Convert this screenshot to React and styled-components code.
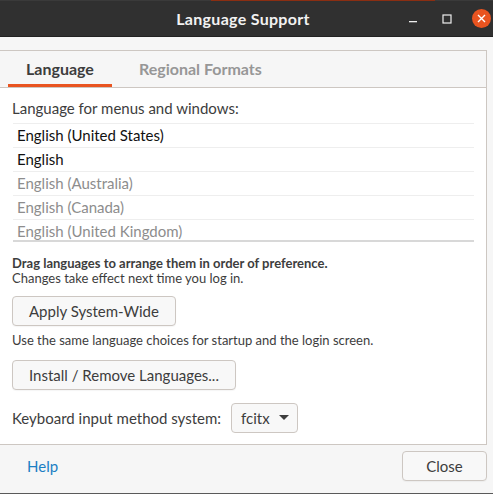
import React from "react";
import styled, { createGlobalStyle } from "styled-components";

const Global = createGlobalStyle`
  html, body { margin: 0; padding: 0; background: #f6f6f6; }
  body { font-family: Lato, "Noto Sans", "DejaVu Sans", sans-serif; font-size: 15px; color: #3d3d3d; }
  * { box-sizing: border-box; }
`;

const Window = styled.div`
  width: 493px;
  height: 494px;
  display: flex;
  flex-direction: column;
  background: #f6f6f6;
  overflow: hidden;
  border-bottom: 1px solid #5a5a5a;
`;

const TopEdge = styled.div`
  height: 1px;
  background: linear-gradient(to right, #3a3a3a 0 211px, #8a2e12 211px 435px, #3a3a3a 435px);
`;

const TitleBar = styled.div`
  height: 36px;
  background: #303030;
  display: flex;
  align-items: center;
  justify-content: center;
  position: relative;
  border-bottom: 1px solid #222;
`;

const Title = styled.div`
  color: #f2f2f2;
  font-weight: 700;
  font-size: 16px;
  letter-spacing: 0.3px;
  padding-right: 7px;
`;

const Controls = styled.div`
  position: absolute;
  right: 2px;
  top: 0;
  height: 100%;
  display: flex;
  align-items: center;
  gap: 14px;
`;

const Ctl = styled.div`
  width: 20px;
  height: 20px;
  display: flex;
  align-items: center;
  justify-content: center;
`;

const CloseCircle = styled.div`
  width: 19px;
  height: 19px;
  border-radius: 50%;
  background: #e95420;
  display: flex;
  align-items: center;
  justify-content: center;
`;

const Body = styled.div`
  flex: 1;
  display: flex;
  flex-direction: column;
  padding-top: 13px;
`;

const Notebook = styled.div`
  margin: 0 6px 0 -1px;
  border: 1px solid #cdc7c2;
  display: flex;
  flex-direction: column;
  height: 395px;
`;

const TabBar = styled.div`
  height: 37px;
  display: flex;
  padding-left: 8px;
  border-bottom: 1px solid #cdc7c2;
  background: #f6f6f6;
`;

const Tab = styled.div`
  height: 100%;
  padding: 0 ${p => p.$pad}px;
  display: flex;
  align-items: center;
  font-weight: 700;
  font-size: 16px;
  color: ${p => (p.$active ? "#3d3d3d" : "#979797")};
  border-bottom: 3px solid ${p => (p.$active ? "#e95420" : "transparent")};
  padding-top: 2px;
`;

const Page = styled.div`
  flex: 1;
  background: #fff;
  padding: 10px 12px 0 12px;
  display: flex;
  flex-direction: column;
`;

const Label = styled.div`
  font-size: 15px;
  line-height: 20px;
  color: #3d3d3d;
`;

const List = styled.div`
  margin-top: 5px;
  margin-left: 1px;
  height: 119px;
  overflow: hidden;
  border-top: 1px solid #eeeeee;
  border-bottom: 2px solid #d8d8d8;
`;

const Row = styled.div`
  height: 24px;
  flex-shrink: 0;
  padding: 0 0 2px 4px;
  display: flex;
  align-items: center;
  font-size: 15px;
  color: ${p => (p.$dim ? "#8d8d8d" : "#111")};
  border-bottom: 1px solid #eeeeee;
`;

const Hint = styled.div`
  margin-top: ${p => p.$mt || 0}px;
  font-size: 13px;
  line-height: 15px;
  color: #3d3d3d;
  font-weight: ${p => (p.$bold ? 700 : 400)};
`;

const Button = styled.button`
  font-family: inherit;
  font-size: 15px;
  color: #3d3d3d;
  background: #f8f8f8;
  border: 1px solid #cdc7c2;
  border-radius: 4px;
  height: 30px;
  padding: 0 16px;
  align-self: flex-start;
  margin-top: ${p => p.$mt || 0}px;
  box-shadow: 0 1px 1px rgba(0,0,0,0.04);
`;

const Note = styled.div`
  margin-top: 6px;
  font-size: 13px;
  line-height: 16px;
  color: #3d3d3d;
`;

const KbdRow = styled.div`
  margin-top: 13px;
  display: flex;
  align-items: center;
  gap: 10px;
`;

const Combo = styled.button`
  font-family: inherit;
  font-size: 15px;
  color: #3d3d3d;
  background: #f8f8f8;
  border: 1px solid #cdc7c2;
  border-radius: 4px;
  height: 30px;
  padding: 0 8px 0 9px;
  display: flex;
  align-items: center;
  gap: 9px;
`;

const Footer = styled.div`
  flex: 1;
  display: flex;
  align-items: flex-start;
  justify-content: space-between;
  padding: 6px 6px 0 27px;
`;

const HelpLink = styled.a`
  color: #1b7fc4;
  font-size: 15px;
  line-height: 30px;
  text-decoration: none;
`;

const CloseBtn = styled(Button)`
  width: 85px;
  padding: 0;
  margin-top: 0;
`;

export default function App() {
  return (
    <>
      <Global />
      <Window>
        <TopEdge />
        <TitleBar>
          <Title>Language Support</Title>
          <Controls>
            <Ctl>
              <svg width="10" height="10" viewBox="0 0 10 10"><rect x="1" y="7" width="8" height="1.3" fill="#eee" /></svg>
            </Ctl>
            <Ctl>
              <svg width="10" height="10" viewBox="0 0 10 10"><rect x="1" y="1" width="8" height="8" fill="none" stroke="#eee" strokeWidth="1.2" /></svg>
            </Ctl>
            <Ctl>
              <CloseCircle>
                <svg width="9" height="9" viewBox="0 0 9 9"><path d="M1 1L8 8M8 1L1 8" stroke="#fff" strokeWidth="1.4" /></svg>
              </CloseCircle>
            </Ctl>
          </Controls>
        </TitleBar>
        <Body>
          <Notebook>
            <TabBar>
              <Tab $active $pad={18}>Language</Tab>
              <Tab $pad={27}>Regional Formats</Tab>
            </TabBar>
            <Page>
              <Label>Language for menus and windows:</Label>
              <List>
                <Row>English (United States)</Row>
                <Row>English</Row>
                <Row $dim>English (Australia)</Row>
                <Row $dim>English (Canada)</Row>
                <Row $dim>English (United Kingdom)</Row>
              </List>
              <Hint $bold $mt={14}>Drag languages to arrange them in order of preference.</Hint>
              <Hint>Changes take effect next time you log in.</Hint>
              <Button $mt={10}>Apply System-Wide</Button>
              <Note>Use the same language choices for startup and the login screen.</Note>
              <Button $mt={12}>Install / Remove Languages...</Button>
              <KbdRow>
                <Label>Keyboard input method system:</Label>
                <Combo>
                  fcitx
                  <svg width="10" height="6" viewBox="0 0 10 6"><path d="M0 0H10L5 5Z" fill="#3d3d3d" /></svg>
                </Combo>
              </KbdRow>
            </Page>
          </Notebook>
          <Footer>
            <HelpLink href="#">Help</HelpLink>
            <CloseBtn>Close</CloseBtn>
          </Footer>
        </Body>
      </Window>
    </>
  );
}
